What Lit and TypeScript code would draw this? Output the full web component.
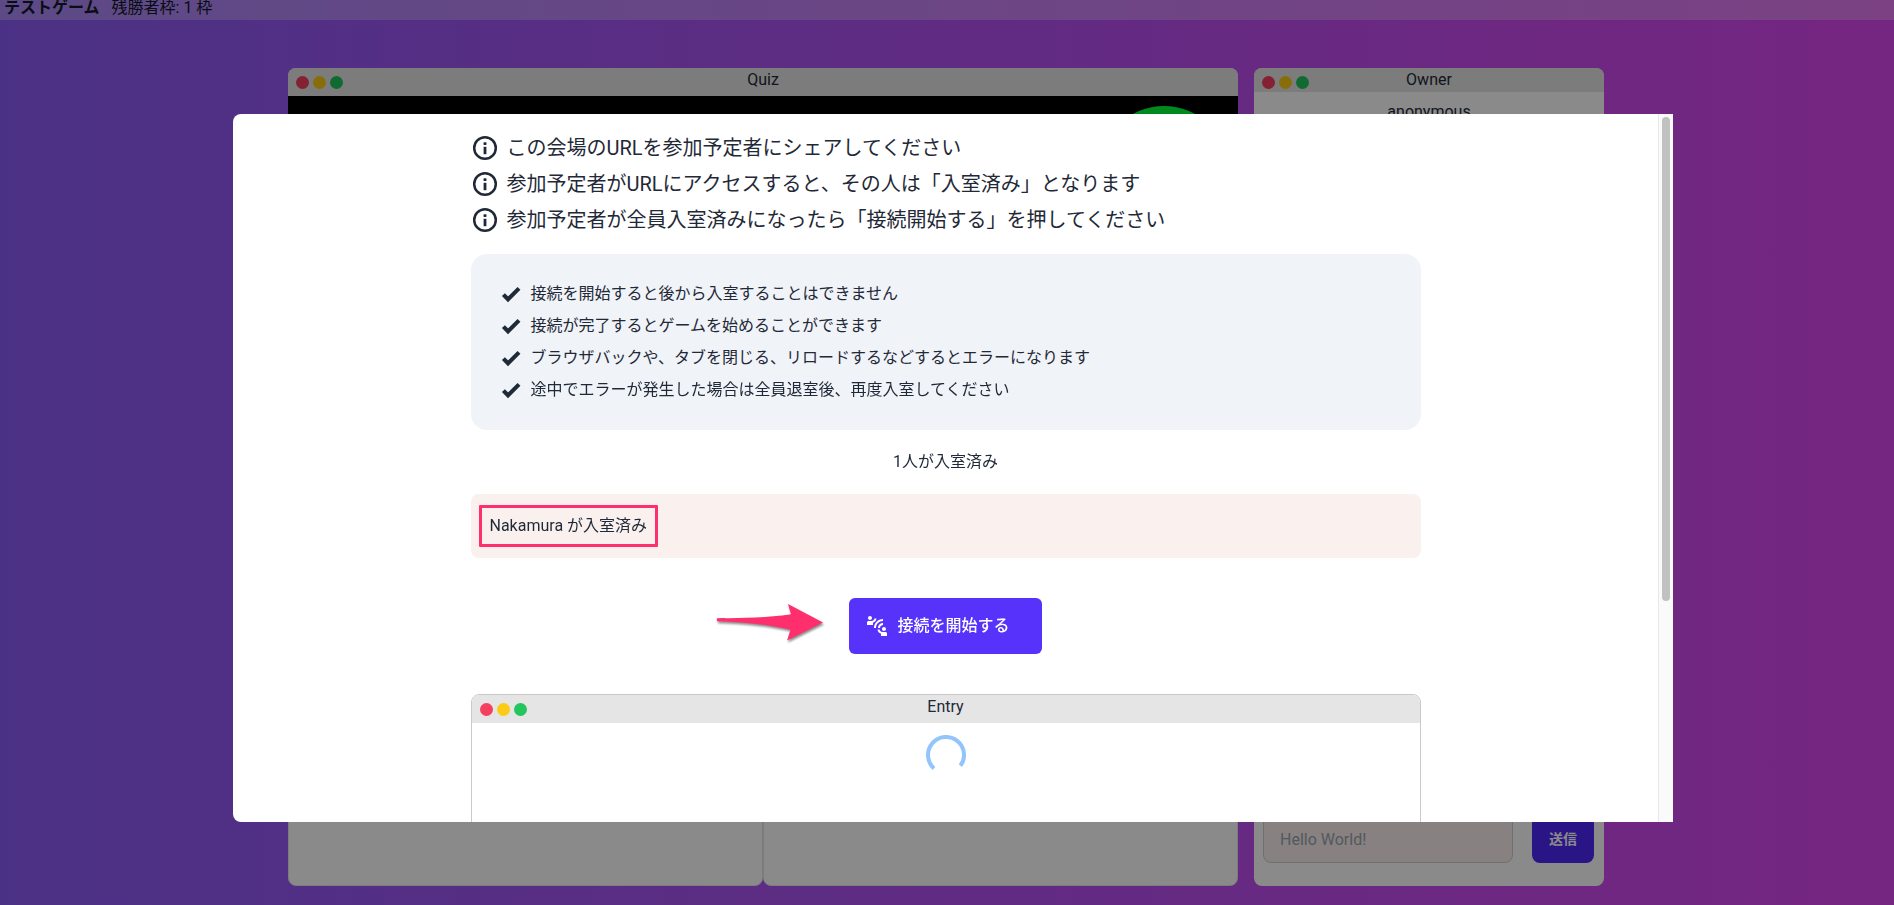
import { LitElement, html, css, svg } from "lit";
import { customElement, property } from "lit/decorators.js";

const notices = [
  "この会場のURLを参加予定者にシェアしてください",
  "参加予定者がURLにアクセスすると、その人は「入室済み」となります",
  "参加予定者が全員入室済みになったら「接続開始する」を押してください",
];

const cautions = [
  "接続を開始すると後から入室することはできません",
  "接続が完了するとゲームを始めることができます",
  "ブラウザバックや、タブを閉じる、リロードするなどするとエラーになります",
  "途中でエラーが発生した場合は全員退室後、再度入室してください",
];

const infoIcon = html`<svg class="info" viewBox="0 0 28 28" aria-hidden="true">
  ${svg`<circle cx="14" cy="14" r="10.8" fill="none" stroke="currentColor" stroke-width="2.5"/>
  <rect x="12.5" y="8.2" width="3" height="2.8" rx="0.8"/><rect x="12.6" y="12.8" width="2.8" height="7.4"/>`}
</svg>`;

const checkIcon = html`<svg class="check" viewBox="0 0 24 24" aria-hidden="true">
  ${svg`<path d="M4.4 12.6 9 17.3 20 6.4" fill="none" stroke="currentColor" stroke-width="4.1"/>`}
</svg>`;

const connectIcon = html`<svg class="connect" viewBox="0 0 24 24" aria-hidden="true">
  ${svg`<path d="M11,14H9c0-4.97,4.03-9,9-9v2C14.13,7,11,10.13,11,14z M18,11V9c-2.76,0-5,2.24-5,5h2C15,12.34,16.34,11,18,11z M7,4c0-1.11-0.89-2-2-2S3,2.89,3,4s0.89,2,2,2S7,5.11,7,4z M11.45,4.5h-2C9.21,5.92,7.99,7,6.5,7h-3C2.67,7,2,7.67,2,8.5V11h6V8.74C9.86,8.15,11.25,6.51,11.45,4.5z M19,17c1.11,0,2-0.89,2-2s-0.89-2-2-2s-2,0.89-2,2S17.89,17,19,17z M20.5,18h-3c-1.49,0-2.71-1.08-2.95-2.5h-2c0.2,2.01,1.59,3.65,3.45,4.24V22h6v-2.5C22,18.67,21.33,18,20.5,18z"/>`}
</svg>`;

@customElement("mock-window")
export class MockWindow extends LitElement {
  @property() heading = "";

  static styles = css`
    :host {
      display: flex;
      flex-direction: column;
      overflow: hidden;
      box-sizing: border-box;
      border-radius: 8px;
      background: #fff;
    }
    .bar {
      display: grid;
      grid-template-columns: 1fr auto 1fr;
      height: var(--bar-height, 28px);
      background: #e5e5e5;
      line-height: 24px;
      flex: none;
    }
    .dots {
      display: flex;
      gap: 4px;
      padding: 8px;
    }
    .dot {
      width: 13px;
      height: 13px;
      border-radius: 50%;
    }
    .red { background: #f43f5e; }
    .yellow { background: #facc15; }
    .green { background: #22c55e; }
    .body {
      flex: 1;
      display: flex;
      flex-direction: column;
    }
  `;

  render() {
    return html`
      <div class="bar">
        <div class="dots">
          <span class="dot red"></span><span class="dot yellow"></span><span class="dot green"></span>
        </div>
        <span>${this.heading}</span>
      </div>
      <div class="body"><slot></slot></div>
    `;
  }
}

@customElement("app-root")
export class AppRoot extends LitElement {
  static styles = css`
    :host {
      display: block;
      font: 16px/24px Roboto, "Noto Sans CJK JP", sans-serif;
      color: #1f2937;
    }
    * { box-sizing: border-box; }
    .page {
      min-height: 100vh;
      display: flex;
      flex-direction: column;
      background: linear-gradient(to right, #8b5cf6, #d946ef);
    }
    .top {
      display: flex;
      gap: 12px;
      height: 20px;
      padding-left: 4px;
      line-height: 16px;
      background: rgba(255, 255, 255, 0.28);
      color: #111827;
    }
    .title {
      margin: 0;
      font-size: 16px;
      font-weight: 700;
    }
    .main {
      flex: 1;
      display: grid;
      grid-template-columns: minmax(0, 950px) minmax(0, 350px);
      gap: 16px;
      justify-content: center;
      padding: 48px 2px 19px 0;
    }
    .left {
      display: flex;
      flex-direction: column;
    }
    .quiz {
      flex: 1;
      border-radius: 8px 8px 0 0;
    }
    .stage {
      flex: 1;
      display: flex;
      justify-content: flex-end;
      padding: 10px;
      background: #000;
    }
    .lamp {
      width: 128px;
      height: 128px;
      border-radius: 50%;
      background: #00ff38;
    }
    .pair {
      display: grid;
      grid-template-columns: 1fr 1fr;
      height: 240px;
    }
    .panel {
      background: #fff;
      border: 1px solid #e5e5e5;
      border-radius: 8px;
    }
    .owner { --bar-height: 24px; }
    .name {
      margin: 0;
      padding: 8px;
      text-align: center;
    }
    .chat {
      display: flex;
      justify-content: space-between;
      gap: 16px;
      margin-top: auto;
      padding: 8px 10px 23px 9px;
    }
    .message {
      width: 250px;
      min-width: 0;
      height: 48px;
      padding: 0 16px;
      border: 1px solid #d0cccc;
      border-radius: 8px;
      background: #faf0ee;
      font: inherit;
    }
    .message::placeholder { color: #9ca3af; opacity: 1; }
    .send {
      height: 48px;
      padding: 0 17px;
      border: 0;
      border-radius: 8px;
      background: #4f27fa;
      color: #fff;
      font: 700 14px/20px Roboto, "Noto Sans CJK JP", sans-serif;
    }
    .overlay {
      position: fixed;
      inset: 0;
      display: flex;
      justify-content: center;
      padding: 114px 0 83px 12px;
      background: rgba(0, 0, 0, 0.46);
    }
    .modal {
      display: flex;
      width: 76vw;
      overflow: hidden;
      border-radius: 8px 0 0 8px;
      background: #fff;
    }
    .content {
      flex: 1;
      overflow: hidden;
      display: flex;
      flex-direction: column;
      align-items: center;
      padding: 20px 16px;
    }
    .content > * {
      flex: none;
      width: 100%;
      max-width: 950px;
    }
    .track {
      width: 15px;
      padding: 3px;
      border-left: 1px solid #e8e8e8;
      background: #fafafa;
    }
    .thumb {
      height: 69%;
      border-radius: 4px;
      background: #c1c1c1;
    }
    .notices, .cautions {
      display: flex;
      flex-direction: column;
      gap: 8px;
      margin: 0;
      padding: 0;
      list-style: none;
    }
    .notices { font-size: 20px; line-height: 28px; }
    .row {
      display: flex;
      align-items: center;
      gap: 8px;
    }
    .cautions {
      margin-top: 20px;
      padding: 28px;
      border-radius: 16px;
      background: #f0f3f8;
    }
    svg { fill: currentColor; flex: none; }
    .info { width: 28px; height: 28px; }
    .check, .connect { width: 24px; height: 24px; }
    .count {
      margin: 20px 0;
      text-align: center;
    }
    .members {
      display: flex;
      align-items: center;
      margin: 0;
      min-height: 64px;
      padding: 8px;
      border-radius: 8px;
      background: #faf0ee;
      list-style: none;
    }
    .member {
      padding: 6px 8px;
      border: 3px solid #ff2f6d;
      border-radius: 1px;
    }
    .action {
      display: flex;
      justify-content: center;
      margin: 40px 0;
    }
    .anchor { position: relative; }
    .start {
      display: flex;
      align-items: center;
      gap: 8px;
      height: 56px;
      padding: 0 32px 0 16px;
      border: 0;
      border-radius: 6px;
      background: #5632fb;
      color: #fff;
      font: 500 16px/24px Roboto, "Noto Sans CJK JP", sans-serif;
    }
    .arrow {
      position: absolute;
      top: 2px;
      right: calc(100% + 22px);
      width: 112px;
      height: 44px;
      overflow: visible;
      filter: drop-shadow(1px 2px 1px rgba(0, 0, 0, 0.45));
    }
    .entry {
      height: 240px;
      border: 1px solid #cfc8ca;
    }
    .spinner {
      width: 40px;
      height: 40px;
      margin: 12px auto;
    }
  `;

  render() {
    return html`
      <div class="page">
        <header class="top">
          <h1 class="title">テストゲーム</h1>
          <span>残勝者枠: 1 枠</span>
        </header>
        <main class="main">
          <section class="left">
            <mock-window class="quiz" heading="Quiz">
              <div class="stage"><span class="lamp"></span></div>
            </mock-window>
            <div class="pair">
              <div class="panel"></div>
              <div class="panel"></div>
            </div>
          </section>
          <mock-window class="owner" heading="Owner">
            <p class="name">anonymous</p>
            <form class="chat" @submit=${(e: Event) => e.preventDefault()}>
              <input class="message" type="text" aria-label="メッセージ" placeholder="Hello World!" />
              <button class="send">送信</button>
            </form>
          </mock-window>
        </main>
      </div>
      <div class="overlay">
        <div class="modal" role="dialog" aria-modal="true" aria-label="Entry">
          <div class="content">
            <ul class="notices">
              ${notices.map((t) => html`<li class="row">${infoIcon}<span>${t}</span></li>`)}
            </ul>
            <ul class="cautions">
              ${cautions.map((t) => html`<li class="row">${checkIcon}<span>${t}</span></li>`)}
            </ul>
            <p class="count">1人が入室済み</p>
            <ul class="members">
              <li class="member">Nakamura が入室済み</li>
            </ul>
            <div class="action">
              <div class="anchor">
                <svg class="arrow" viewBox="0 0 112 44" aria-hidden="true">
                  ${svg`<path fill="#ff2f6d" d="M2 18.2Q1.4 19.8 2.2 21.2C28 22.4 54 24.5 75.5 29.8L72 40.5 108 22.5 73 4 76 14.2C52 17.8 28 18 2 18.2Z"/>`}
                </svg>
                <button class="start">${connectIcon}<span>接続を開始する</span></button>
              </div>
            </div>
            <mock-window class="entry" heading="Entry">
              <svg class="spinner" viewBox="0 0 40 40" role="img" aria-label="読み込み中">
                ${svg`<path d="M8 33.4A18 18 0 1 1 34.4 30.8" fill="none" stroke="#93c5fd" stroke-width="4"/>`}
              </svg>
            </mock-window>
          </div>
          <div class="track"><div class="thumb"></div></div>
        </div>
      </div>
    `;
  }
}
